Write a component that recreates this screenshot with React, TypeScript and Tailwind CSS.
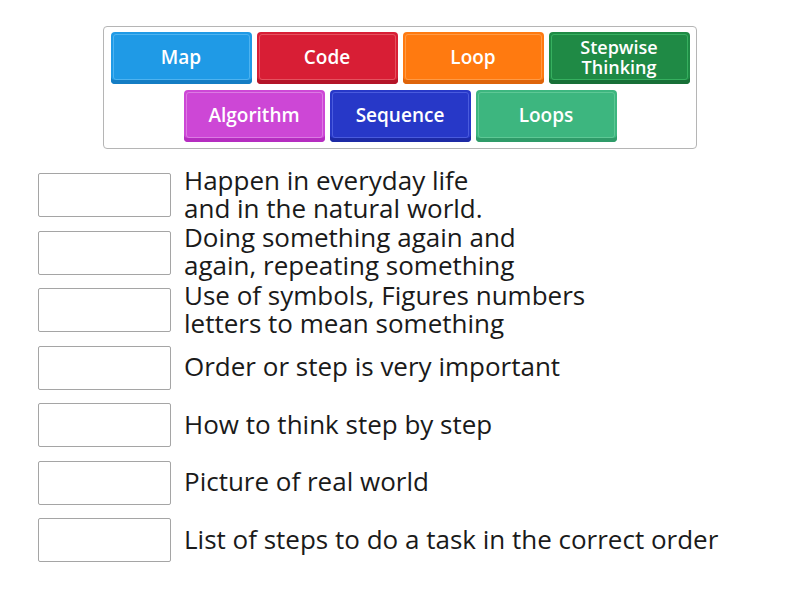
import React from "react";

const tilesRow = [
  { label: "Map", bg: "bg-[#1f9ae6]", light: "border-[#4db3f0]", dark: "shadow-[inset_0_-4px_0_#147dc4]" },
  { label: "Code", bg: "bg-[#d81e35]", light: "border-[#e5525f]", dark: "shadow-[inset_0_-4px_0_#b31528]" },
  { label: "Loop", bg: "bg-[#ff7a10]", light: "border-[#ff9a45]", dark: "shadow-[inset_0_-4px_0_#de640a]" },
  { label: "Stepwise Thinking", bg: "bg-[#1f8a45]", light: "border-[#36b05f]", dark: "shadow-[inset_0_-4px_0_#186f37]" },
  { label: "Algorithm", bg: "bg-[#cd47d6]", light: "border-[#dc7ae3]", dark: "shadow-[inset_0_-4px_0_#b52dc0]" },
  { label: "Sequence", bg: "bg-[#2738c8]", light: "border-[#4a5bdd]", dark: "shadow-[inset_0_-4px_0_#1d2aa5]" },
  { label: "Loops", bg: "bg-[#3db67f]", light: "border-[#5ec895]", dark: "shadow-[inset_0_-4px_0_#2f9b69]" },
];

const items: React.ReactNode[] = [
  <>Happen in everyday life<br />and in the natural world.</>,
  <>Doing something again and<br />again, repeating something</>,
  <>Use of symbols, Figures numbers<br />letters to mean something</>,
  <>Order or step is very important</>,
  <>How to think step by step</>,
  <>Picture of real world</>,
  <>List of steps to do a task in the correct order</>,
];

function Tile({ t }: { t: (typeof tilesRow)[number] }) {
  const twoLine = t.label.includes(" ");
  return (
    <div className={`w-[141px] h-[52px] rounded-[4px] ${t.bg} ${t.dark} p-[2px]`}>
      <div className={`w-full h-[46px] rounded-[3px] border ${t.light} flex items-center justify-center text-white text-center ${twoLine ? "text-[18px] leading-[20px]" : "text-[19px] leading-[22px]"} font-semibold`}>
        {twoLine ? (
          <span>
            Stepwise
            <br />
            Thinking
          </span>
        ) : (
          t.label
        )}
      </div>
    </div>
  );
}

export default function App() {
  return (
    <div className="w-[800px] h-[600px] bg-white pt-[26px]" style={{ fontFamily: "'Open Sans', Lato, sans-serif" }}>
      <div className="mx-auto w-[594px] border border-[#b5b5b5] rounded-[4px] px-[6px] pt-[5px] pb-[6px] flex flex-wrap justify-center gap-x-[5px] gap-y-[6px]">
        {tilesRow.map((t) => (
          <Tile key={t.label} t={t} />
        ))}
      </div>
      <div className="mt-[24px] pl-[38px] flex flex-col gap-[13.5px]">
        {items.map((it, i) => (
          <div key={i} className="flex items-center h-[44px]">
            <div className="w-[133px] h-[44px] border border-[#a5a5a5] rounded-[2px] bg-white shrink-0" />
            <div className="ml-[13px] -mt-[3px] text-[26px] leading-[28px] text-[#1a1a1a] whitespace-nowrap">{it}</div>
          </div>
        ))}
      </div>
    </div>
  );
}
